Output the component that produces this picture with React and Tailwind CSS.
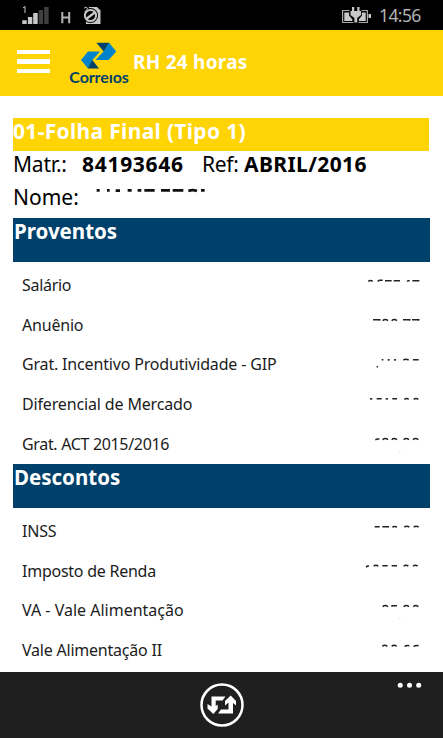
import React from 'react';

// Amounts are hidden, only the worn top edge of each figure is left
const proventos = [
  { label: 'Salário', track: 'tracking-[-0.3px]', marks: 'M16 10 q6 -5 13 0 M44 10 l5 -3 h10 M66 8 h20 M92 8 h19 M132 10 l4 -2 h4 M148 8 h21' },
  { label: 'Anuênio', track: 'tracking-[-0.2px]', marks: 'M30 8 h20 l-1 3 M59 11 q7 -7 16 0 M86 11 q7 -7 16 0 M120 8 h20 l-1 3 M147 8 h20 l-1 3' },
  { label: 'Grat. Incentivo Produtividade - GIP', track: 'tracking-[-0.17px]', marks: 'M56 8 h5 M74 9 l6 -1 M93 9 l6 -1 M121 9 q7 -4 16 0 M150 8 h17 M41 29 h4' },
  { label: 'Diferencial de Mercado', track: 'tracking-[-0.15px]', marks: 'M21 9 l7 -1 M41 8 h15 M68 9 l7 -1 M88 8 h14 M124 10 q7 -5 13 0 M152 10 q7 -5 14 0' },
  { label: 'Grat. ACT 2015/2016', track: 'tracking-[-0.33px]', marks: 'M37 11 l6 -2 h4 v2 M59 11 q7 -7 16 0 M86 11 q7 -7 16 0 M122 11 q7 -7 16 0 M150 11 q7 -7 16 0', speck: true },
];

const descontos = [
  { label: 'INSS', track: 'tracking-[-0.2px]', marks: 'M35 8 h15 M58 8 h20 M88 9 q7 -3 14 0 M124 9 q7 -4 15 0 M152 9 q7 -4 15 0' },
  { label: 'Imposto de Renda', track: 'tracking-[-0.25px]', marks: 'M9 12 l5 -3 h4 M32 9 q7 -4 14 0 M58 8 h16 M86 8 h16 M122 9 q7 -4 14 0 M150 9 q7 -4 14 0' },
  { label: 'VA - Vale Alimentação', track: 'tracking-[0px]', marks: 'M59 11 q7 -7 16 0 M87 11 v-3 h15 M122 11 q7 -7 16 0 M151 11 q7 -7 15 0', speck: true },
  { label: 'Vale Alimentação II', track: 'tracking-[-0.22px]', marks: 'M58 10 q7 -6 15 0 M86 10 q7 -6 15 0 M125 11 q3 -4 14 -3 M152 11 q3 -4 15 -3' },
];

function StatusBar() {
  return (
    <div className="flex h-[30px] shrink-0 items-center bg-black text-[#b4b4b4]">
      <svg className="ml-[20px]" width="84" height="30" viewBox="0 0 84 30" fill="#c8c8c8">
        <path d="M3 8 l2 -1.5 V13" fill="none" stroke="#c8c8c8" strokeWidth="1" />
        <path d="M2.300 20.300h4.400v3.700H2.300z M7.900 17h4.400v7H7.900z M13.200 13h4.500v11h-4.500z" />
        <path d="M18.700 10h4.400v14h-4.400z M24.200 7h4.400v17h-4.400z" fill="#404040" />
        <path d="M42.300 12v11.300 M49.200 12v11.300 M42.300 17.600h7" fill="none" stroke="#b4b4b4" strokeWidth="2" />
        <path d="M69 7h8l3.500 3.500V24H66v-3z" />
        <circle cx="70.500" cy="15.500" r="7.600" fill="#000" />
        <circle cx="70.500" cy="15.500" r="5.600" fill="none" stroke="#c8c8c8" strokeWidth="2" />
        <path d="M66.800 18.500l8 -6" stroke="#c8c8c8" strokeWidth="2.200" />
        <path d="M64 8.200q2 -2 3.500 0q0 1.500 -3 4" fill="none" stroke="#c8c8c8" strokeWidth="1" />
      </svg>
      <svg className="ml-auto" width="32" height="30" viewBox="0 0 32 30">
        <path d="M.6 10.500h24.800v12H.6z" fill="none" stroke="#a8a8a8" strokeWidth="1.200" />
        <path d="M2.300 12.500h5v3l3 4v1.500h-8z M23.700 12.500h-4v3l-3 4v1.500h7z" fill="#c8c8c8" />
        <path d="M26.500 14h2.500v4h-2.500z" fill="#c8c8c8" />
        <path d="M7.500 9h12v7l-3 3v5h-5v-5l-4 -3z" fill="#000" />
        <path d="M10 7h2.200v4h3.100V7h2.200v4h1.500v4l-3.800 3v4.500h-2.800V18L8.500 15v-4H10z" fill="#c8c8c8" />
      </svg>
      <span className="ml-[5px] mr-[21px] w-[43px] whitespace-nowrap pt-[1px] text-[17.500px] leading-none tracking-[-0.6px]">14:56</span>
    </div>
  );
}

function CorreiosLogo() {
  return (
    <div className="flex w-[60px] flex-col items-center">
      <svg width="38" height="27" viewBox="0 0 38 27">
        <path d="M1 18L8 9.500h12L12.500 18l-4.500 8.500z" fill="#0083ca" />
        <path d="M12.300 18L19 26.500H7.800z" fill="#00416b" />
        <path d="M16.300 .8h13L23.800 9.500z" fill="#00416b" />
        <path d="M29 .8l7.300 8.700L28.500 18h-13L23.500 9.500z" fill="#0083ca" />
      </svg>
      <span className="font-['Lato'] text-[16px] font-bold leading-[16px] tracking-[-0.1px] text-[#00416b]">Correıos</span>
    </div>
  );
}

function Header() {
  return (
    <div className="flex h-[66px] shrink-0 items-center bg-[#ffd405]">
      <div className="ml-[17px] flex w-[33px] flex-col gap-[5px] pb-[3px]">
        <span className="h-[4px] bg-white" />
        <span className="h-[5px] bg-white" />
        <span className="h-[4px] bg-white" />
      </div>
      <div className="ml-[19px] mr-[1px] mt-[1px] h-[44px]">
        <CorreiosLogo />
      </div>
      <h1 className="ml-[3px] pb-[1px] text-[19px] font-bold tracking-[0.25px] text-white">RH 24 horas</h1>
    </div>
  );
}

function Section({ title, rows }) {
  return (
    <section>
      <h2 className="h-[44px] bg-[#00416b] pl-px text-[20.500px] font-bold leading-[26px] text-white">{title}</h2>
      <ul className="pt-[4px]">
        {rows.map((row) => (
          <li key={row.label} className="flex h-[39.650px] justify-between pl-[9px] pr-[7px]">
            <span className={`whitespace-nowrap text-[16px] leading-[39px] ${row.track}`}>{row.label}</span>
            <svg className="mt-[11.500px]" width="60" height="18" viewBox="0 0 180 54" fill="none" stroke="#222" strokeWidth="4.500">
              <path d={row.marks} />
              {row.speck && <path d="M109 46h3" stroke="#ccc" strokeWidth="3" />}
            </svg>
          </li>
        ))}
      </ul>
    </section>
  );
}

function AppBar() {
  return (
    <div className="relative flex h-[66px] shrink-0 justify-center bg-[#1f1f1f]">
      <svg className="mt-[11px]" width="44" height="44" viewBox="0 0 44 44">
        <circle cx="22" cy="22" r="20.500" fill="none" stroke="#fff" strokeWidth="2.500" />
        <path d="M11.500 13.500h14l-3 4H15.700v5.500l2 -1.500v4.500L13.300 31L7.500 25.500V21l4 2.500z" fill="#fff" />
        <path d="M33 30.500H18l3 -4h7.500V19.500l-3.500 3V18L30.700 12.500L36 18v4.500l-3 -2.500z" fill="#fff" />
      </svg>
      <svg className="absolute right-[20px] top-[10px]" width="26" height="7" viewBox="0 0 26 7" fill="#fff">
        <circle cx="3.200" cy="3.300" r="2.500" />
        <circle cx="12.500" cy="3.300" r="2.500" />
        <circle cx="21.700" cy="3.300" r="2.500" />
      </svg>
    </div>
  );
}

export default function App() {
  return (
    <div className="flex h-[738px] w-[443px] flex-col overflow-hidden bg-white font-['Noto_Sans',sans-serif] text-[#1c1c1c]">
      <StatusBar />
      <Header />
      <main className="min-h-0 flex-1 pl-[13px] pr-[13px] pt-[22px]">
        <div className="mr-[1px] h-[33px] whitespace-nowrap bg-[#ffd405] text-[21px] font-bold leading-[26px] tracking-[0.32px] text-white">01-Folha Final (Tipo 1)</div>
        <div className="flex h-[33px] items-center whitespace-nowrap pb-[6px] text-[21px] text-black">
          <span className="w-[69px] tracking-[-0.2px]">Matr.:</span>
          <b className="w-[120px] tracking-[0.7px]">84193646</b>
          <span className="w-[42px] tracking-[-0.3px]">Ref:</span>
          <b className="tracking-[0.4px]">ABRIL/2016</b>
        </div>
        <div className="flex h-[34px] whitespace-nowrap text-[21px] leading-[27px] text-black">
          <span className="w-[82px]">Nome:</span>
          <svg className="mt-[4px]" width="112" height="5" viewBox="0 0 336 15" fill="none" stroke="#111" strokeWidth="8">
            <path d="M5 7h9 M36 7h8 M62 8h13 M98 7h12 M128 7h11 M148 7h31 M198 7h27 M233 7h32 M280 9q13 -5 26 0 M318 7h11" />
          </svg>
        </div>
        <Section title="Proventos" rows={proventos} />
        <Section title="Descontos" rows={descontos} />
      </main>
      <AppBar />
    </div>
  );
}
